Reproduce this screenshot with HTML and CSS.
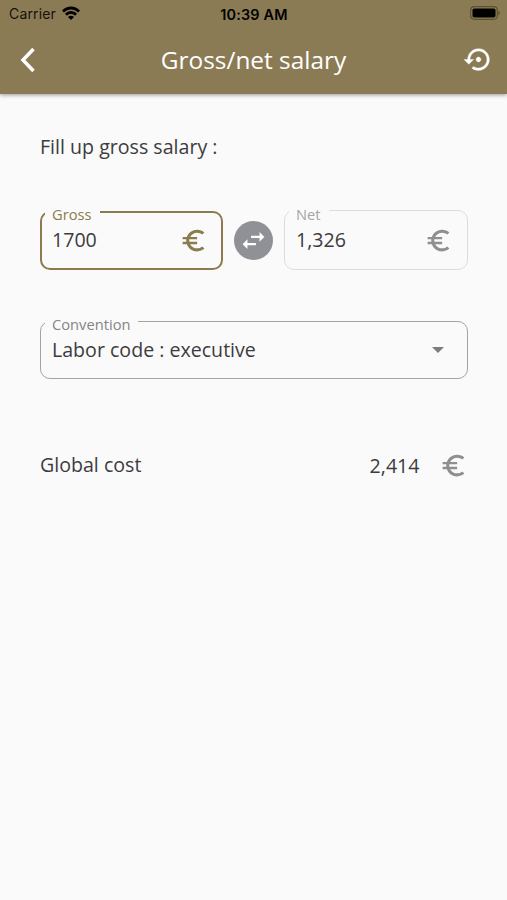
FILE: index.html
```html
<!DOCTYPE html>
<html lang="en">
<head>
<meta charset="utf-8">
<title>Gross/net salary</title>
<link rel="stylesheet" href="styles.css">
</head>
<body>
<svg class="defs" width="0" height="0" aria-hidden="true">
  <symbol id="euro" viewBox="0 0 24 24"><path d="M15 18.5c-2.51 0-4.68-1.42-5.76-3.5H15v-2H8.58c-.05-.33-.08-.66-.08-1s.03-.67.08-1H15V9H9.24C10.32 6.92 12.5 5.5 15 5.5c1.61 0 3.09.59 4.23 1.57L21 5.3C19.41 3.87 17.3 3 15 3c-3.92 0-7.24 2.51-8.48 6H3v2h3.06c-.04.33-.06.66-.06 1s.02.67.06 1H3v2h3.52c1.24 3.49 4.56 6 8.48 6 2.31 0 4.41-.87 6-2.3l-1.78-1.77c-1.13.98-2.6 1.57-4.22 1.57z"/></symbol>
</svg>
<header class="top">
  <div class="status">
    <div class="carrier"><span>Carrier</span>
      <svg class="wifi" viewBox="0 0 18 14"><path d="M0 4.6C5-.9 13-.9 18 4.6l-1.9 2C12.100 2.300 5.900 2.300 1.900 6.600z"/><path d="M3 7.800C6.400 4.200 11.600 4.200 15 7.800l-1.900 2C10.800 7.400 7.200 7.400 4.900 9.800z"/><path d="M6 11c1.700-1.700 4.300-1.700 6 0l-3 3z"/></svg>
    </div>
    <div class="time">10:39 AM</div>
    <svg class="battery" viewBox="0 0 30 14"><rect class="shell" x=".7" y=".7" width="26.600" height="12.600" rx="3.500"/><rect x="2.500" y="2.500" width="23" height="9" rx="1.800"/><path class="cap" d="M28.300 4.800c2 .7 2 3.700 0 4.400z"/></svg>
  </div>
  <div class="bar">
    <svg class="back" viewBox="0 0 16 26"><path d="M13.500 2L3 13l10.500 11"/></svg>
    <h1>Gross/net salary</h1>
    <svg class="restore" viewBox="0 0 24 24"><path d="M14 12c0-1.100-.9-2-2-2s-2 .9-2 2 .9 2 2 2 2-.9 2-2zm-2-9c-4.970 0-9 4.030-9 9H0l4 4 4-4H5c0-3.870 3.130-7 7-7s7 3.130 7 7-3.130 7-7 7c-1.510 0-2.910-.49-4.060-1.300l-1.420 1.440C8.040 20.300 9.940 21 12 21c4.970 0 9-4.030 9-9s-4.030-9-9-9z"/></svg>
  </div>
</header>
<main>
  <p class="prompt">Fill up gross salary :</p>
  <div class="amounts">
    <fieldset class="field active"><legend>Gross</legend>
      <div class="value"><span>1700</span><svg class="euro"><use href="#euro"/></svg></div>
    </fieldset>
    <div class="swap"><svg viewBox="0 0 24 24"><path d="M6.990 11L3 15l3.990 4v-3H14v-2H6.990v-3zM21 9l-3.990-4v3H10v2h7.010v3L21 9z"/></svg></div>
    <fieldset class="field muted"><legend>Net</legend>
      <div class="value"><span>1,326</span><svg class="euro"><use href="#euro"/></svg></div>
    </fieldset>
  </div>
  <fieldset class="field select"><legend>Convention</legend>
    <div class="value"><span>Labor code : executive</span><svg class="caret" viewBox="0 0 12 6"><path d="M0 0h12L6 6z"/></svg></div>
  </fieldset>
  <div class="total"><span class="name">Global cost</span><span class="sum">2,414</span><svg class="euro"><use href="#euro"/></svg></div>
</main>
</body>
</html>
```
FILE: styles.css
```css
* { box-sizing: border-box; }
body {
  margin: 0;
  height: 900px;
  background: #fafafa;
  color: #3c3c3e;
  font-family: "Open Sans", sans-serif;
  font-size: 19.600px;
}
svg { display: block; flex: none; }
.defs { position: absolute; }
.top {
  height: 94px;
  background: #8b7b55;
  box-shadow: 0 1px 4px rgba(0, 0, 0, .4);
}
.status {
  height: 28px;
  padding: 0 7px 0 9px;
  display: grid;
  grid-template-columns: 1fr auto 1fr;
  align-items: center;
  color: #15120b;
  font-family: Inter, sans-serif;
  font-size: 14px;
}
.carrier { display: flex; align-items: center; gap: 6px; margin-top: -2px; letter-spacing: .15px; }
.wifi { width: 18px; height: 14px; }
.time { margin-left: -1px; font-weight: 600; font-size: 14.400px; letter-spacing: .2px; color: #000; }
.battery { width: 30px; height: 14px; justify-self: end; margin-top: -2px; }
.shell { fill: none; stroke: #59532f; stroke-width: 1.200; }
.cap { fill: #59532f; }
.bar {
  height: 64px;
  padding: 0 20px;
  display: grid;
  grid-template-columns: 1fr auto 1fr;
  align-items: center;
  color: #fff;
}
.back { width: 16px; height: 26px; fill: none; stroke: #fff; stroke-width: 3.500; }
.restore { width: 29px; height: 29px; fill: #fff; stroke: #fff; stroke-width: .3; justify-self: end; margin: -1px -5.500px 0 0; }
h1 { margin: 0; font-size: 24.400px; font-weight: 400; line-height: 32px; }
main { padding: 38px 39px 0 40px; }
.prompt { margin: 0; line-height: 30px; }
.amounts { display: flex; align-items: flex-start; margin-top: 40px; }
.field {
  margin: 0;
  min-width: 0;
  height: 68px;
  padding: 0 14px 0 4px;
  border: 1px solid #a3a3a3;
  border-radius: 10px;
}
.field legend {
  height: 20px;
  padding: 5px 8px 0 7px;
  color: #858585;
  font-size: 14.700px;
  line-height: 14px;
}
.value {
  height: 36px;
  padding-left: 7px;
  display: flex;
  align-items: center;
  justify-content: space-between;
}
.value span, .name { padding-bottom: 2px; }
.euro { width: 29px; height: 29px; fill: #8f8f8f; }
.active { width: 183px; padding-left: 3px; padding-right: 13px; border: 2px solid #8b7b4d; }
.active legend { color: #8b7b4d; }
.active .euro { fill: #8b7b4d; }
.muted { width: 184px; height: 70px; margin-top: -2px; border-color: #dcdcdc; }
.muted legend { padding-top: 7px; color: #a5a5a5; }
.muted .value { height: 40px; }
.swap {
  width: 39px;
  height: 39px;
  margin: 19px 11px 0;
  display: grid;
  place-items: center;
  border-radius: 50%;
  background: #909196;
}
.swap svg { width: 29px; height: 29px; fill: #fff; }
.select { width: 428px; margin-top: 41px; padding-right: 23px; }
.select legend { padding-top: 6px; }
.select .value { height: 38px; }
.caret { width: 12px; height: 6px; fill: #7d7d7d; }
.total { height: 36px; margin-top: 68px; display: flex; align-items: center; }
.sum { margin-left: auto; margin-right: 19.500px; }
```
